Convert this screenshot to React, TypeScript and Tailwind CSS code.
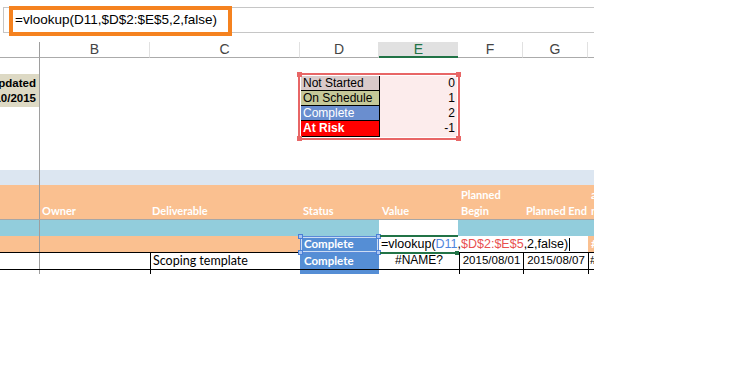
import React from 'react';

const arial = "font-['Liberation_Sans',Arial,sans-serif]";
const calibri = "font-['Lato',sans-serif]";

const lookup = [
  { label: 'Not Started', value: '0', cls: 'bg-[#d9caca] text-black', h: 'h-[15px]' },
  { label: 'On Schedule', value: '1', cls: 'bg-[#c5c898] text-black', h: 'h-[15px]' },
  { label: 'Complete', value: '2', cls: 'bg-[#6a8ecf] text-white', h: 'h-[15px]' },
  { label: 'At Risk', value: '-1', cls: 'bg-[#ff0000] text-white font-bold', h: 'h-[16px]' },
];

// petit carré de poignée aux coins d'une sélection
const Handle = ({ className }: { className: string }) => (
  <div className={`absolute h-[5px] w-[5px] ${className}`} />
);

const ColumnHeaders = () => {
  const cell = 'border-b border-b-[#ababab] border-r border-r-[#e1e1e1] text-center';
  return (
    <div className="flex h-[16px] text-[14px] leading-[15px] text-[#444]">
      <div className="w-[40px] border-b border-b-[#ababab] border-r border-r-[#9e9e9e]" />
      <div className={`w-[110px] ${cell}`}>B</div>
      <div className={`w-[150px] ${cell}`}>C</div>
      <div className={`w-[79px] ${cell}`}>D</div>
      <div className="w-[79px] border-b-2 border-[#217346] bg-[#e1e1e1] text-center text-[#217346]">E</div>
      <div className={`w-[65px] ${cell}`}>F</div>
      <div className={`w-[65px] ${cell}`}>G</div>
      <div className="w-[6px] border-b border-b-[#ababab]" />
    </div>
  );
};

const TopBlock = () => (
  <div className="flex h-[112px]">
    <div className="w-[40px] border-r border-[#9e9e9e] pt-[16px]">
      <div className="flex h-[33px] w-[39px] flex-col items-end justify-center overflow-hidden bg-[#ddd9c4] pr-[3px] text-[11.5px] font-bold leading-[15px]">
        <div className="whitespace-nowrap">Last Updated</div>
        <div className="whitespace-nowrap">07/10/2015</div>
      </div>
    </div>
    <div className="w-[260px]" />
    <div className="w-[158px] pt-[18px] pl-[1px]">
      <div className="relative w-[156px] text-[12px] leading-[14px]">
        {lookup.map((r) => (
          <div key={r.label} className={`flex ${r.h}`}>
            <div className={`w-[79px] border-r border-b border-black pl-[2px] ${r.cls}`}>{r.label}</div>
            <div className="flex-1 bg-[#fcecec] pr-[2px] text-right">{r.value}</div>
          </div>
        ))}
        <div className="absolute -inset-[3px] border-2 border-[#e86666]">
          <Handle className="-left-[3px] -top-[3px] bg-[#e86666]" />
          <Handle className="-right-[3px] -top-[3px] bg-[#e86666]" />
          <Handle className="-left-[3px] -bottom-[3px] bg-[#e86666]" />
          <Handle className="-right-[3px] -bottom-[3px] bg-[#e86666]" />
        </div>
      </div>
    </div>
    <div className="flex-1" />
  </div>
);

const HeaderCell = ({ w, pl, lines }: { w: string; pl: string; lines: string[] }) => (
  <div className={`${w} ${pl} flex flex-col justify-end overflow-hidden whitespace-nowrap`}>
    {lines.map((l) => (
      <div key={l}>{l}</div>
    ))}
  </div>
);

const TableBlock = () => (
  <div>
    {/* bande bleu clair */}
    <div className="flex h-[15px] bg-[#dce6f1]">
      <div className="w-[40px] border-r border-[#9e9e9e]" />
    </div>

    {/* en-têtes orange */}
    <div className={`flex h-[35px] border-b border-[#a6a6a6] bg-[#fac090] text-[11px] font-bold leading-[16px] text-white ${calibri}`}>
      <div className="w-[40px] border-r border-[#9e9e9e]" />
      <HeaderCell w="w-[110px]" pl="pl-[2px]" lines={['Owner']} />
      <HeaderCell w="w-[150px]" pl="pl-[2px]" lines={['Deliverable']} />
      <HeaderCell w="w-[79px]" pl="pl-[3px]" lines={['Status']} />
      <HeaderCell w="w-[79px]" pl="pl-[3px]" lines={['Value']} />
      <HeaderCell w="w-[65px]" pl="pl-[3px]" lines={['Planned', 'Begin']} />
      <HeaderCell w="w-[65px]" pl="pl-[3px]" lines={['Planned End']} />
      <HeaderCell w="w-[6px]" pl="pl-[3px]" lines={['a', 'n']} />
    </div>

    {/* ligne turquoise */}
    <div className="flex h-[16px] bg-[#92cddc]">
      <div className="w-[40px] border-r border-[#9e9e9e]" />
      <div className="w-[339px]" />
      <div className="w-[79px] bg-white" />
    </div>

    {/* ligne en cours d'édition */}
    <div className="flex h-[16px] bg-[#fac090] text-[11.5px] leading-[15px]">
      <div className="w-[40px] border-r border-[#9e9e9e]" />
      <div className="w-[260px]" />
      <div className={`w-[79px] bg-[#558ed5] pl-[4px] font-bold text-white ${calibri}`}>Complete</div>
      <div className="flex w-[209px] items-center overflow-hidden whitespace-nowrap bg-white pl-[2px] text-[12.5px]">
        <span>=vlookup(</span>
        <span className="text-[#4f86dc]">D11</span>
        <span>,</span>
        <span className="text-[#e8504f]">$D$2:$E$5</span>
        <span>,2,false)</span>
        <span className="ml-px h-[13px] w-px bg-black" />
      </div>
      <div className={`w-[6px] overflow-hidden pl-[3px] font-bold text-white ${calibri}`}>#</div>
    </div>

    {/* ligne de données */}
    <div className="flex h-[17px] border-t border-black text-[12px] leading-[15px]">
      <div className="w-[40px] border-r border-[#9e9e9e]" />
      <div className="w-[110px]" />
      <div className={`w-[150px] border-l border-black pl-[2px] text-[12.5px] ${calibri}`}>Scoping template</div>
      <div className={`w-[79px] bg-[#558ed5] pl-[4px] text-[11.5px] font-bold text-white ${calibri}`}>Complete</div>
      <div className="w-[80px] text-center text-[12px]">#NAME?</div>
      <div className="w-[64px] border-l border-black text-center text-[11.5px]">2015/08/01</div>
      <div className="w-[65px] border-l border-black text-center text-[11.5px]">2015/08/07</div>
      <div className="w-[6px] overflow-hidden border-l border-black pl-[1px] text-[11.5px]">#</div>
    </div>

    {/* début de la ligne suivante */}
    <div className="flex h-[5px] border-t border-black">
      <div className="w-[40px] border-r border-[#9e9e9e]" />
      <div className="w-[110px]" />
      <div className="w-[150px] border-l border-black" />
      <div className="w-[79px] bg-[#558ed5]" />
      <div className="w-[80px]" />
      <div className="w-[64px] border-l border-black" />
      <div className="w-[65px] border-l border-black" />
      <div className="w-[6px] border-l border-black" />
    </div>
  </div>
);

export default function App() {
  return (
    <div className={`h-[392px] w-[751px] overflow-hidden bg-white text-black ${arial}`}>
      <div className="relative w-[594px]">
        {/* barre de formule */}
        <div className="h-[42px] pl-[3px] pt-[7px]">
          <div className="flex h-[26px] items-center whitespace-nowrap border-y border-l border-[#c6c6c6] pl-[11px] text-[13.5px]">
            =vlookup(D11,$D$2:$E$5,2,false)
          </div>
        </div>
        <ColumnHeaders />
        <TopBlock />
        <TableBlock />

        {/* annotation orange */}
        <div className="absolute left-[9px] top-[6px] h-[30px] w-[223px] border-4 border-[#f5821f]" />

        {/* sélection bleue autour de D11 */}
        <div className="absolute left-[300px] top-[236px] h-[17px] w-[79px] border border-[#5a8ad8]">
          <div className="h-full w-full border border-white/70" />
          <Handle className="-left-[3px] -top-[3px] border border-[#4a7fd6] bg-[#a9c4f0]" />
          <Handle className="-right-[3px] -top-[3px] border border-[#4a7fd6] bg-[#a9c4f0]" />
          <Handle className="-left-[3px] -bottom-[3px] border border-[#4a7fd6] bg-[#a9c4f0]" />
          <Handle className="-right-[3px] -bottom-[3px] border border-[#4a7fd6] bg-[#a9c4f0]" />
        </div>

        {/* cellule active en vert */}
        <div className="absolute left-[380px] top-[235px] h-[2px] w-[78px] bg-[#217346]" />
        <div className="absolute left-[380px] top-[252px] h-[2px] w-[78px] bg-[#217346]" />
        <div className="absolute left-[455px] top-[251px] h-[4px] w-[4px] bg-[#217346]" />
      </div>
    </div>
  );
}
